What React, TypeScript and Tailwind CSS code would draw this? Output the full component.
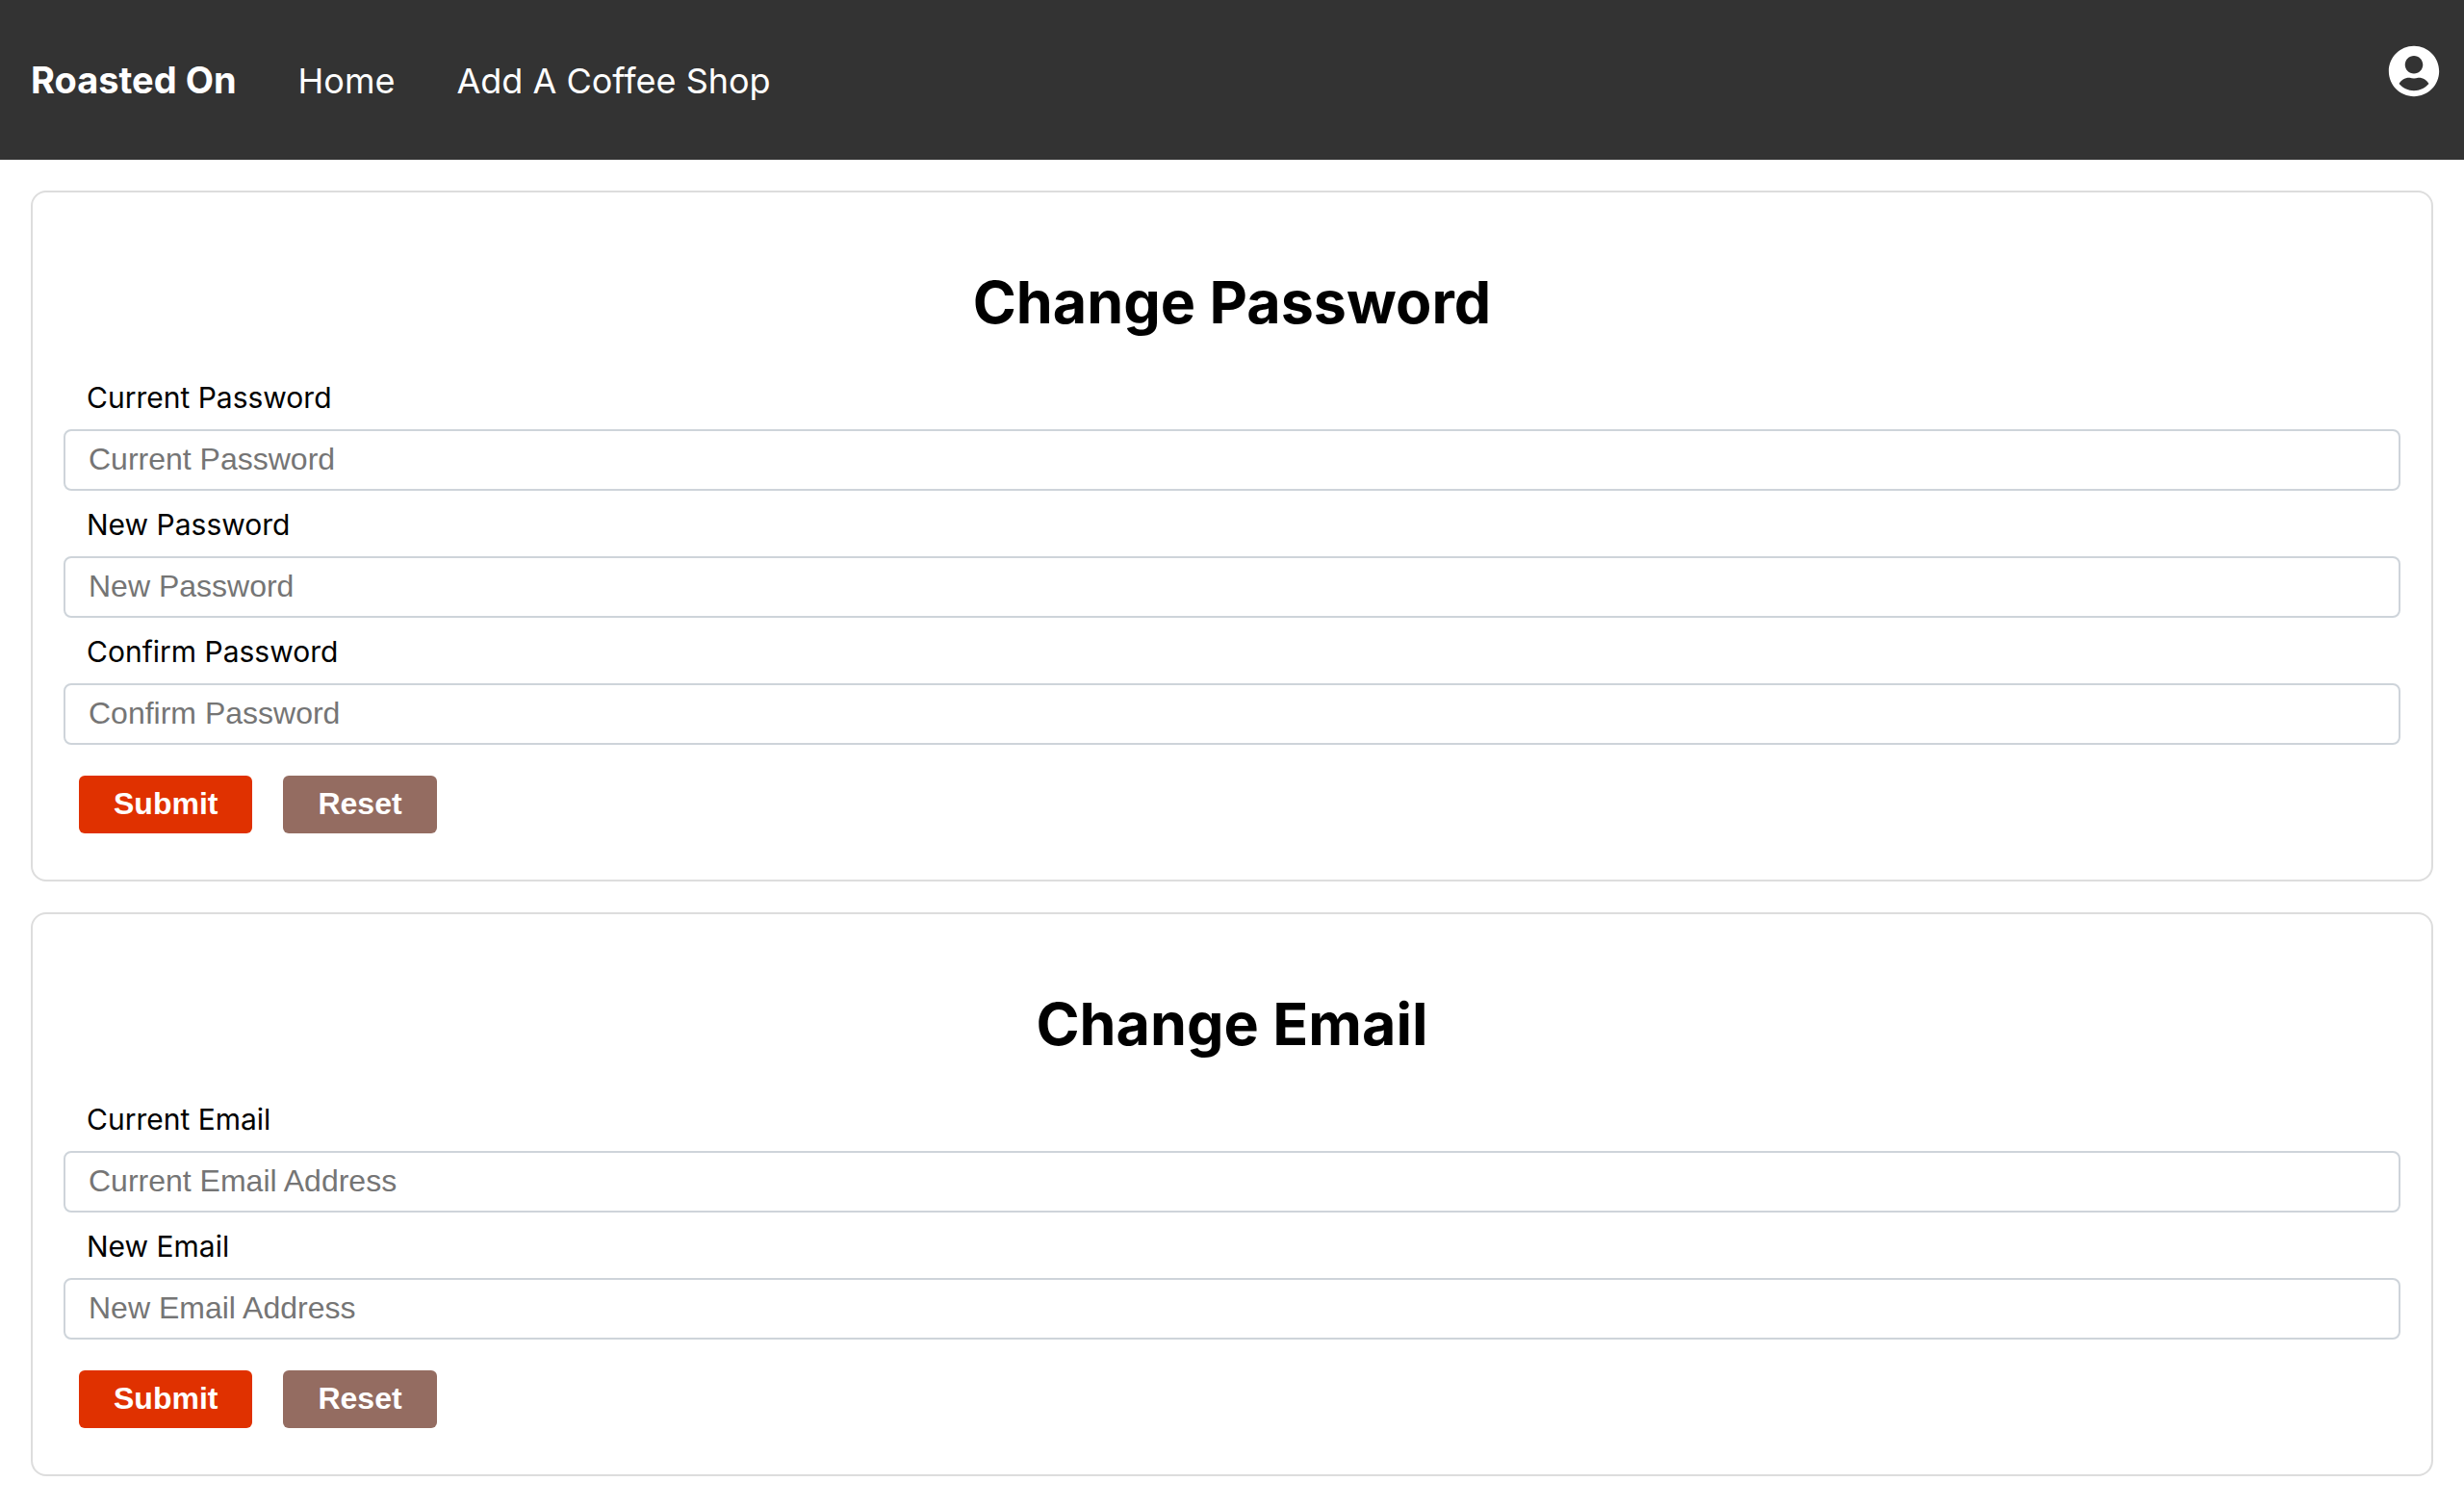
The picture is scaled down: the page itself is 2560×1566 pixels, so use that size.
import { FaUserCircle } from "react-icons/fa";

type Field = { id: string; label: string; placeholder: string; type: string };

const passwordFields: Field[] = [
  { id: "current-password", label: "Current Password", placeholder: "Current Password", type: "password" },
  { id: "new-password", label: "New Password", placeholder: "New Password", type: "password" },
  { id: "confirm-password", label: "Confirm Password", placeholder: "Confirm Password", type: "password" },
];

const emailFields: Field[] = [
  { id: "current-email", label: "Current Email", placeholder: "Current Email Address", type: "email" },
  { id: "new-email", label: "New Email", placeholder: "New Email Address", type: "email" },
];

function Header() {
  return (
    <header className="flex items-start justify-between bg-[#333333] pr-[25px] pl-8 text-white">
      <nav className="flex items-baseline gap-16 pt-14 pb-[55px] text-[36px] leading-[54px]">
        <a href="#" className="text-[38px] font-bold">Roasted On</a>
        <a href="#home">Home</a>
        <a href="#add">Add A Coffee Shop</a>
      </nav>
      <button type="button" aria-label="Account" className="mt-[47px]">
        <FaUserCircle className="size-[54px]" />
      </button>
    </header>
  );
}

function FormCard({ title, fields }: { title: string; fields: Field[] }) {
  return (
    <section className="rounded-2xl border-2 border-[#dddddd] px-8 pb-12">
      <h1 className="pt-[76px] pb-[26px] text-center text-[61px] leading-[76px] font-bold">{title}</h1>
      <form>
        {fields.map((f) => (
          <div key={f.id}>
            <label htmlFor={f.id} className="block pt-0.5 pl-6 text-[30px] leading-[66px]">
              {f.label}
            </label>
            <input
              id={f.id}
              type={f.type}
              placeholder={f.placeholder}
              className="block h-16 w-full rounded-lg border-2 border-[#ced4da] px-6 pb-0.5 font-['Liberation_Sans',Arial,sans-serif] text-[32px] placeholder:text-[#757575]"
            />
          </div>
        ))}
        <div className="mt-8 flex gap-8 pl-4 font-['Liberation_Sans',Arial,sans-serif] text-[32px] leading-[58px] font-bold text-white">
          <button type="submit" className="rounded-md bg-[#e03100] px-9 pb-0.5">Submit</button>
          <button type="reset" className="rounded-md bg-[#946c61] px-9 pb-0.5">Reset</button>
        </div>
      </form>
    </section>
  );
}

export default function App() {
  return (
    <div className="min-h-screen bg-white font-[Inter,sans-serif] text-black">
      <Header />
      <main className="flex flex-col gap-8 p-8">
        <FormCard title="Change Password" fields={passwordFields} />
        <FormCard title="Change Email" fields={emailFields} />
      </main>
    </div>
  );
}
